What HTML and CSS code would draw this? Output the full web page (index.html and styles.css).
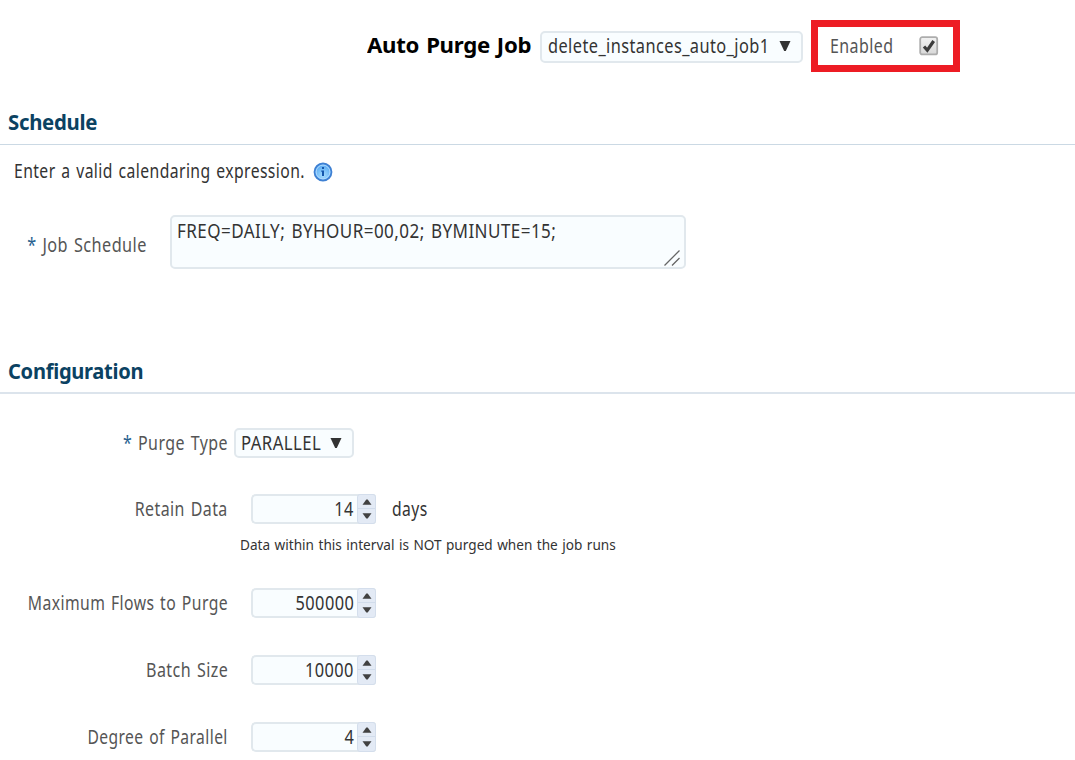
FILE: index.html
```html
<!DOCTYPE html>
<html lang="en">
<head>
<meta charset="utf-8">
<title>Auto Purge Job</title>
<link rel="stylesheet" href="styles.css">
</head>
<body>
<header class="top">
  <h1 class="title"><span class="t t-title">Auto Purge Job</span></h1>
  <div class="select job"><span class="t t-job">delete_instances_auto_job1</span><svg class="caret" viewBox="0 0 12 12"><path d="M.5 1h11L6.8 11H5.2z"/></svg></div>
  <div class="enabled"><span class="t t-enabled">Enabled</span>
    <svg class="check" viewBox="0 0 20 20"><defs><linearGradient id="cb" x2="0" y2="1"><stop stop-color="#f2f2f2"/><stop offset="1" stop-color="#d8d8d8"/></linearGradient></defs><rect x="1.2" y="1.2" width="17" height="17.2" rx="2" fill="url(#cb)" stroke="#adadad" stroke-width="1.8"/><path d="M5 10.5l3.3 3.7L14.7 5" fill="none" stroke="#3c3c3c" stroke-width="3.2"/></svg>
  </div>
</header>
<main>
  <section class="schedule">
    <h2><span class="t t-schedule">Schedule</span></h2>
    <div class="hint"><span class="t t-hint">Enter a valid calendaring expression.</span>
      <svg class="info" viewBox="0 0 20 20"><defs><radialGradient id="ib" cy=".7"><stop stop-color="#a5dcff"/><stop offset="1" stop-color="#65b2f4"/></radialGradient></defs><circle cx="10" cy="10" r="8.5" fill="url(#ib)" stroke="#3e80d3" stroke-width="1.8"/><circle cx="10" cy="10" r="6.9" fill="none" stroke="#b5dcff" stroke-width=".9"/><path d="M9 5h2v2H9zM8.2 8.5H11V14H9v-4.3h-.8z" fill="#1557ad"/></svg>
    </div>
    <div class="row job-row">
      <div class="label"><span class="t t-jobsched"><b class="req">*</b> Job Schedule</span></div>
      <div class="area"><span class="t t-freq">FREQ=DAILY; BYHOUR=00,02; BYMINUTE=15;</span><svg class="grip" viewBox="0 0 16 16"><path d="M.5 15.5l15-15M8 15.5l7.5-7.5" fill="none" stroke="#666" stroke-width="1.3"/></svg></div>
    </div>
  </section>
  <section class="config">
    <h2><span class="t t-config">Configuration</span></h2>
    <div class="row type-row">
      <div class="label"><span class="t t-type"><b class="req">*</b> Purge Type</span></div>
      <div class="select type"><span class="t t-parallel">PARALLEL</span><svg class="caret" viewBox="0 0 12 12"><path d="M.5 1h11L6.8 11H5.2z"/></svg></div>
    </div>
    <div class="row retain-row">
      <div class="label"><span class="t t-retain">Retain Data</span></div>
      <div class="spin"><span class="t t-num">14</span><i class="arrows"><svg viewBox="0 0 10 6"><path d="M.5 5.8L4.3.5h1.4l3.8 5.3z"/></svg><svg viewBox="0 0 10 6"><path d="M.5.2L4.3 5.5h1.4L9.5.2z"/></svg></i></div>
      <span class="t t-days">days</span>
    </div>
    <p class="note"><span class="t t-note">Data within this interval is NOT purged when the job runs</span></p>
    <div class="row flows-row">
      <div class="label"><span class="t t-flows">Maximum Flows to Purge</span></div>
      <div class="spin"><span class="t t-num">500000</span><i class="arrows"><svg viewBox="0 0 10 6"><path d="M.5 5.8L4.3.5h1.4l3.8 5.3z"/></svg><svg viewBox="0 0 10 6"><path d="M.5.2L4.3 5.5h1.4L9.5.2z"/></svg></i></div>
    </div>
    <div class="row batch-row">
      <div class="label"><span class="t t-batch">Batch Size</span></div>
      <div class="spin"><span class="t t-num">10000</span><i class="arrows"><svg viewBox="0 0 10 6"><path d="M.5 5.8L4.3.5h1.4l3.8 5.3z"/></svg><svg viewBox="0 0 10 6"><path d="M.5.2L4.3 5.5h1.4L9.5.2z"/></svg></i></div>
    </div>
    <div class="row degree-row">
      <div class="label"><span class="t t-degree">Degree of Parallel</span></div>
      <div class="spin"><span class="t t-num">4</span><i class="arrows"><svg viewBox="0 0 10 6"><path d="M.5 5.8L4.3.5h1.4l3.8 5.3z"/></svg><svg viewBox="0 0 10 6"><path d="M.5.2L4.3 5.5h1.4L9.5.2z"/></svg></i></div>
    </div>
  </section>
</main>
</body>
</html>
```

FILE: styles.css
```css
* { box-sizing: border-box; }
body { margin: 0; width: 1075px; height: 760px; overflow: hidden; background: #fff; color: #333; font: 19px/28px "Noto Sans", sans-serif; }
h1, h2, p { margin: 0; }
svg { display: block; flex: none; }
/* Condensed lettering: --s is the horizontal scale of each text */
.t { --s: .84; display: block; flex: none; white-space: pre; letter-spacing: .5px; word-spacing: 1.5px; transform: scaleX(var(--s)); transform-origin: left center; }
.t-title { --s: 1.01; }
.t-job { --s: .86; }
.t-schedule { --s: .97; }
.t-config { --s: .957; }
.t-title, .t-schedule, .t-config { letter-spacing: -.3px; }
.t-hint { --s: .827; }
.t-jobsched { --s: .856; }
.t-freq { --s: .896; }
.t-parallel { --s: .88; }
.t-num { --s: .86; }
.t-days { --s: .825; }
.t-note { --s: .938; letter-spacing: 0; word-spacing: 1px; }
.t-flows { --s: .827; }
.t-batch { --s: .845; }
.t-degree { --s: .822; }

.top { display: flex; height: 105px; padding: 20px 0 0 367px; align-items: flex-start; }
.title { width: 173px; height: 52px; font-size: 22px; line-height: 49px; color: #000; }
.select { display: flex; justify-content: space-between; align-items: center; border: 2px solid #e1e8ed; border-radius: 5px; background: #f9fdff; }
.job { width: 263px; height: 32px; margin-top: 11px; padding: 0 10px 2px 6px; }
.job .t { width: 221px; }
.caret { width: 12px; height: 12px; fill: #333; }
.enabled { display: flex; width: 149px; height: 52px; margin-left: 8px; border: 7px solid #ed1c24; padding: 0 14px 0 12px; justify-content: space-between; align-items: center; color: #555; }
.enabled .t { width: 63px; }
.check { width: 20px; height: 20px; }

h2 { height: 40px; padding: 0 8px; border-bottom: 2px solid #dce4ec; font-size: 21px; line-height: 34px; color: #0b4262; }
.schedule { height: 249px; }
.schedule h2 { border-bottom-width: 1px; border-color: #cbd9e4; }
.hint { display: flex; height: 54px; padding-left: 14px; align-items: center; }
.hint .t { width: 299px; line-height: 30px; padding-bottom: 2px; }
.info { width: 20px; height: 20px; }
.row { display: flex; align-items: center; }
.label { display: flex; flex: none; width: 228px; margin-right: -1px; justify-content: flex-end; color: #555; }
.label .t { transform-origin: right center; }
.req { font-weight: 400; color: #27618f; }
.job-row { height: 54px; margin-top: 16px; }
.job-row .label { width: 147px; margin-right: 23px; padding-top: 5px; }
.area { position: relative; width: 516px; height: 54px; padding-left: 5px; border: 2px solid #e1e8ed; border-radius: 5px; background: #f9fdff; }
.grip { position: absolute; right: 4px; bottom: 1px; width: 16px; height: 16px; }

.type-row { height: 30px; margin-top: 34px; }
.type { width: 120px; height: 30px; margin-left: 7px; padding: 0 10px 0 5px; }
.type .t { width: 80px; }
.retain-row { height: 30px; margin-top: 36px; }
.spin { display: flex; width: 125px; height: 30px; margin: 0 16px 0 24px; align-items: center; justify-content: flex-end; border: 2px solid #e1e8ed; border-right: 0; border-radius: 5px 3px 3px 5px; background: #f9fdff; }
.spin .t { transform-origin: right center; }
.arrows { display: grid; grid-template-rows: 1fr 1fr; flex: none; width: 19px; height: 30px; margin-left: 3px; place-items: center; border: 1px solid #d4deec; border-radius: 3px; background: linear-gradient(#e3eaf5 0 13px, #d1dceb 13px 14px, #e3eaf5 14px); }
.arrows svg { width: 10px; height: 6px; fill: #414141; }
.note { height: 30px; padding: 6px 0 0 240px; font-size: 14.5px; line-height: 28px; }
.flows-row { height: 30px; margin-top: 34px; }
.batch-row { height: 30px; margin-top: 37px; }
.degree-row { height: 30px; margin-top: 37px; }
```
